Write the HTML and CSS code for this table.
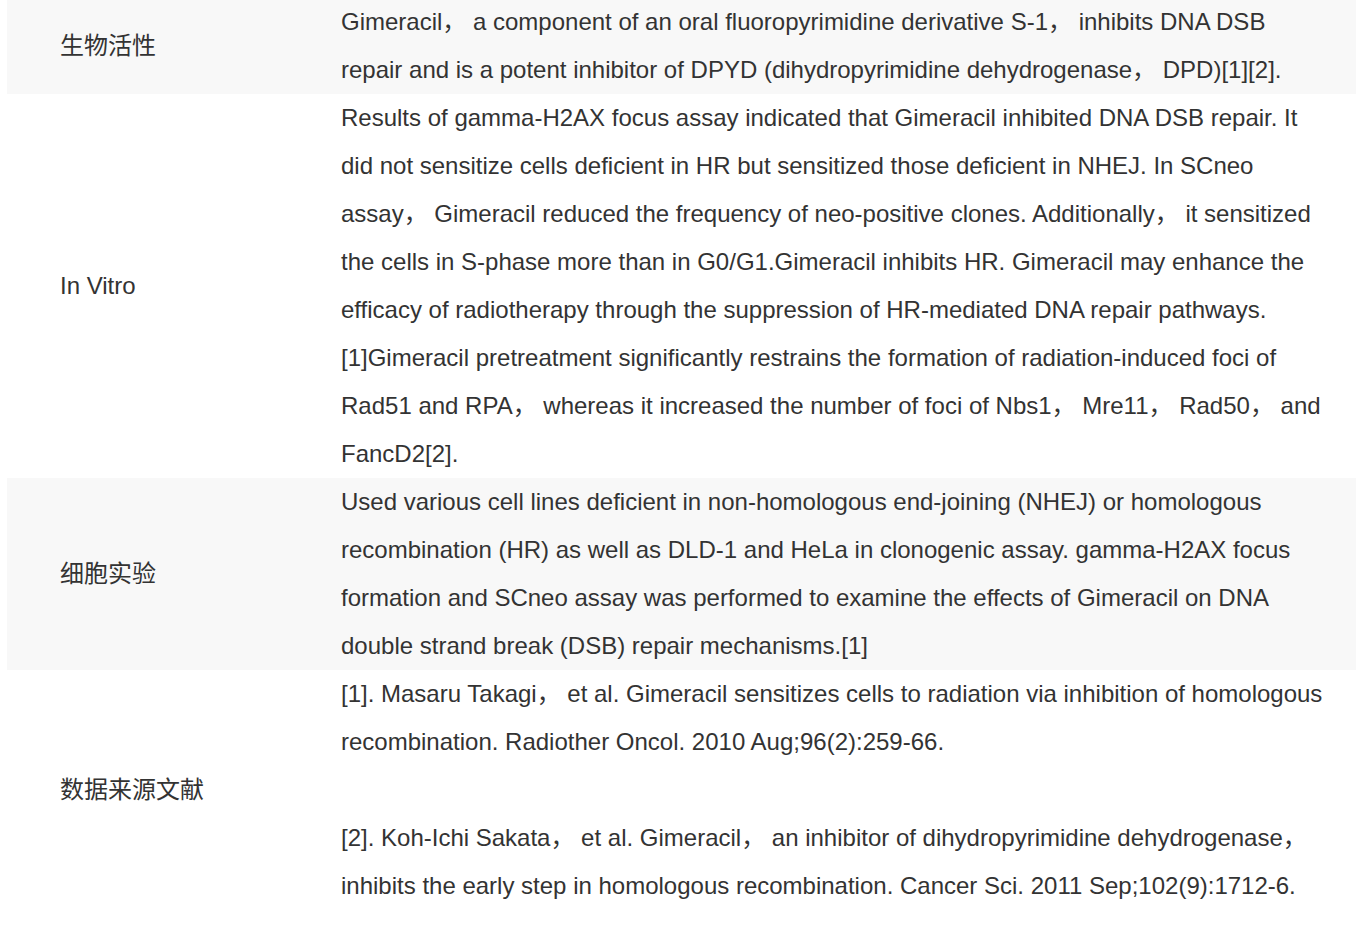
FILE: index.html
```html
<!DOCTYPE html>
<html lang="zh-CN">
<head>
<meta charset="utf-8">
<title>Gimeracil</title>
<link rel="stylesheet" href="styles.css">
</head>
<body>
<table class="info">
  <tbody>
    <tr class="row shade">
      <td class="label">生物活性</td>
      <td class="content"><p>Gimeracil， a component of an oral fluoropyrimidine derivative S-1， inhibits DNA DSB repair and is a potent inhibitor of DPYD (dihydropyrimidine dehydrogenase， DPD)[1][2].</p></td>
    </tr>
    <tr class="row">
      <td class="label">In Vitro</td>
      <td class="content"><p>Results of gamma-H2AX focus assay indicated that Gimeracil inhibited DNA DSB repair. It did not sensitize cells deficient in HR but sensitized those deficient in NHEJ. In SCneo assay， Gimeracil reduced the frequency of neo-positive clones. Additionally， it sensitized the cells in S-phase more than in G0/G1.Gimeracil inhibits HR. Gimeracil may enhance the efficacy of radiotherapy through the suppression of HR-mediated DNA repair pathways.[1]Gimeracil pretreatment significantly restrains the formation of radiation-induced foci of Rad51 and RPA， whereas it increased the number of foci of Nbs1， Mre11， Rad50， and FancD2[2].</p></td>
    </tr>
    <tr class="row shade">
      <td class="label">细胞实验</td>
      <td class="content"><p>Used various cell lines deficient in non-homologous end-joining (NHEJ) or homologous recombination (HR) as well as DLD-1 and HeLa in clonogenic assay. gamma-H2AX focus formation and SCneo assay was performed to examine the effects of Gimeracil on DNA double strand break (DSB) repair mechanisms.[1]</p></td>
    </tr>
    <tr class="row">
      <td class="label">数据来源文献</td>
      <td class="content">
        <p>[1]. Masaru Takagi， et al. Gimeracil sensitizes cells to radiation via inhibition of homologous recombination. Radiother Oncol. 2010 Aug;96(2):259-66.</p>
        <p><br></p>
        <p>[2]. Koh-Ichi Sakata， et al. Gimeracil， an inhibitor of dihydropyrimidine dehydrogenase， inhibits the early step in homologous recombination. Cancer Sci. 2011 Sep;102(9):1712-6.</p>
      </td>
    </tr>
  </tbody>
</table>
</body>
</html>
```
FILE: styles.css
```css
html, body {
  margin: 0;
  padding: 0;
  background: #ffffff;
}

body {
  font-family: "Liberation Sans", Arial, "Noto Sans CJK SC", sans-serif;
  font-size: 24px;
  line-height: 48px;
  color: #333333;
}

.info {
  border-collapse: collapse;
  border-spacing: 0;
  width: 1349px;
  margin: -2px 0 0 7px;
  table-layout: fixed;
}

.row.shade {
  background: #f8f8f8;
}

.label {
  width: 281px;
  padding: 0 0 0 53px;
  vertical-align: middle;
  white-space: nowrap;
}

.content {
  padding: 0 27px 0 0;
  vertical-align: top;
}

.content p {
  margin: 0;
}
```
